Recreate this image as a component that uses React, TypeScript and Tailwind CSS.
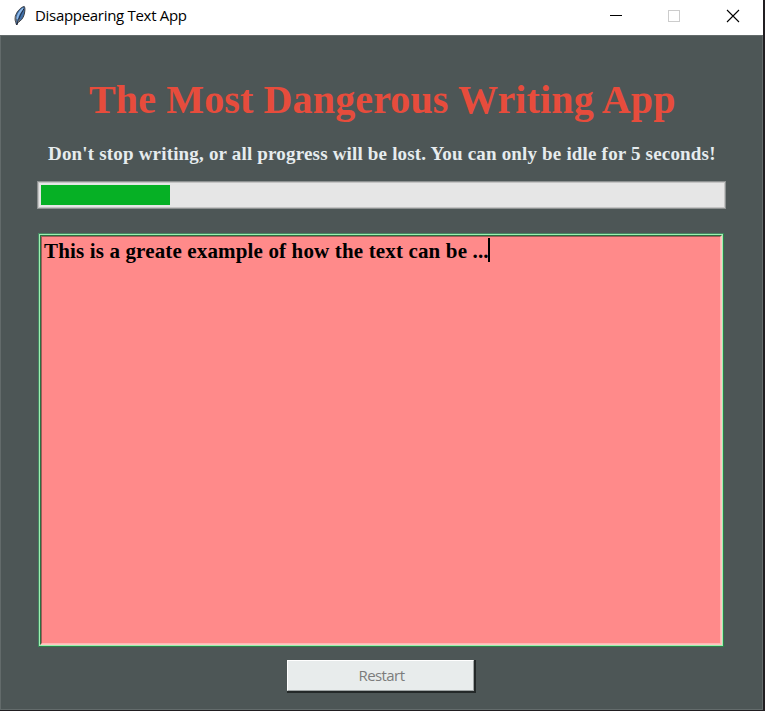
import React from "react";

function FeatherIcon() {
  return (
    <svg className="ml-[13px] mt-px h-[22px] w-[14px] shrink-0" viewBox="0 0 14 22">
      <path d="M11.3 1.5 C8 2 4.5 6 3 9.5 C1.8 12.5 1.8 15 2.8 17.5 L3.6 20 L4.8 17.5 C8 16 10.2 13 11.2 9.5 C12 6 12.3 3 11.3 1.5Z" fill="#3f6fa8" stroke="#3a3c42" strokeWidth="1" />
      <path d="M10.2 3.5 C7.2 6 5 9.5 4 14" fill="none" stroke="#8db8e8" strokeWidth="1.8" />
      <path d="M10.8 4 C8.4 8 6.2 12 3.8 20" fill="none" stroke="#1b2436" strokeWidth="1" />
      <path d="M2.4 11 L3.2 17 M5.3 17 L6.5 14" stroke="#6b6b6b" strokeWidth="1.2" />
    </svg>
  );
}

function TitleBar() {
  return (
    <header className="flex h-[35px] shrink-0 items-start bg-white pt-[4px] font-['Open_Sans','Noto_Sans',sans-serif] text-black">
      <FeatherIcon />
      <span className="ml-[8px] w-[200px] whitespace-nowrap text-[15px] leading-[22px] tracking-[-0.3px]">
        Disappearing Text App
      </span>
      <div className="ml-auto flex h-[24px] items-center">
        <svg className="h-[24px] w-[154px]" viewBox="0 0 154 24" shapeRendering="crispEdges">
          <path d="M1 11.5h12" stroke="#000" />
          <rect x="59.5" y="6.5" width="11" height="11" fill="none" stroke="#ccc" />
          <path d="M118 6l12 12M130 6l-12 12" stroke="#000" strokeWidth="1.1" shapeRendering="auto" />
        </svg>
      </div>
    </header>
  );
}

function ProgressBar({ value }: { value: number }) {
  return (
    <div className="ml-[36px] mt-[15px] h-[28px] w-[689px] shrink-0 border border-[#8d9191]">
      <div className="h-full border border-[#c4c4c4] bg-[#e6e6e6] p-[2px]">
        <div className="h-full bg-[#06b025]" style={{ width: `${value}%` }} />
      </div>
    </div>
  );
}

function Editor() {
  return (
    <div className="ml-[37px] mt-[24px] h-[414px] w-[686px] shrink-0 border border-t-[#468663] border-l-[#468663] border-r-[#2c8048] border-b-[#2c8048]">
      <div className="h-full border border-[#9cf0b1]">
        <div className="h-full border border-t-[#2b7040] border-l-[#2b7040] border-r-[#ffc5c0] border-b-[#ffc5c0]">
          <div className="flex h-full items-start border border-t-[#a05c59] border-l-[#a05c59] border-r-[#ffb8b5] border-b-[#ffb8b5] bg-[#ff8a8a] pl-[2px] pt-[1px]">
            <span className="whitespace-nowrap font-['Liberation_Serif',serif] text-[21px] font-bold leading-[26px] tracking-[0.15px] text-black">
              This is a greate example of how the text can be ...
            </span>
            <span className="-ml-px h-[24px] w-[2px] bg-black" />
          </div>
        </div>
      </div>
    </div>
  );
}

export default function App() {
  return (
    <div className="flex h-[711px] w-[765px] flex-col overflow-hidden border-b border-r-2 border-[#211e21] bg-[#4d5656]">
      <TitleBar />
      <main className="flex min-h-0 flex-1 flex-col border border-[#636b6b]">
        <h1 className="mt-[40px] whitespace-nowrap pl-[88px] font-['Liberation_Serif',serif] text-[40px] font-bold leading-[48px] tracking-[0.14px] text-[#e74c3c]">
          The Most Dangerous Writing App
        </h1>
        <p className="mt-[18px] whitespace-nowrap pl-[47px] font-['Liberation_Serif',serif] text-[19px] font-bold leading-[24px] tracking-[0.18px] text-[#e6ecee]">
          Don't stop writing, or all progress will be lost. You can only be idle for 5 seconds!
        </p>
        <ProgressBar value={19} />
        <Editor />
        <button className="ml-[286px] mt-[13px] h-[33px] w-[189px] shrink-0 border-b-2 border-r-2 border-[#242929] bg-[#e8ecec]">
          <span className="flex h-full items-center justify-center border border-b-[#a0a5a5] border-l-white border-r-[#a0a5a5] border-t-white pl-[2px] font-['Open_Sans','Noto_Sans',sans-serif] text-[15px] tracking-[-0.6px] text-[#7c7c7c]">
            Restart
          </span>
        </button>
      </main>
    </div>
  );
}
